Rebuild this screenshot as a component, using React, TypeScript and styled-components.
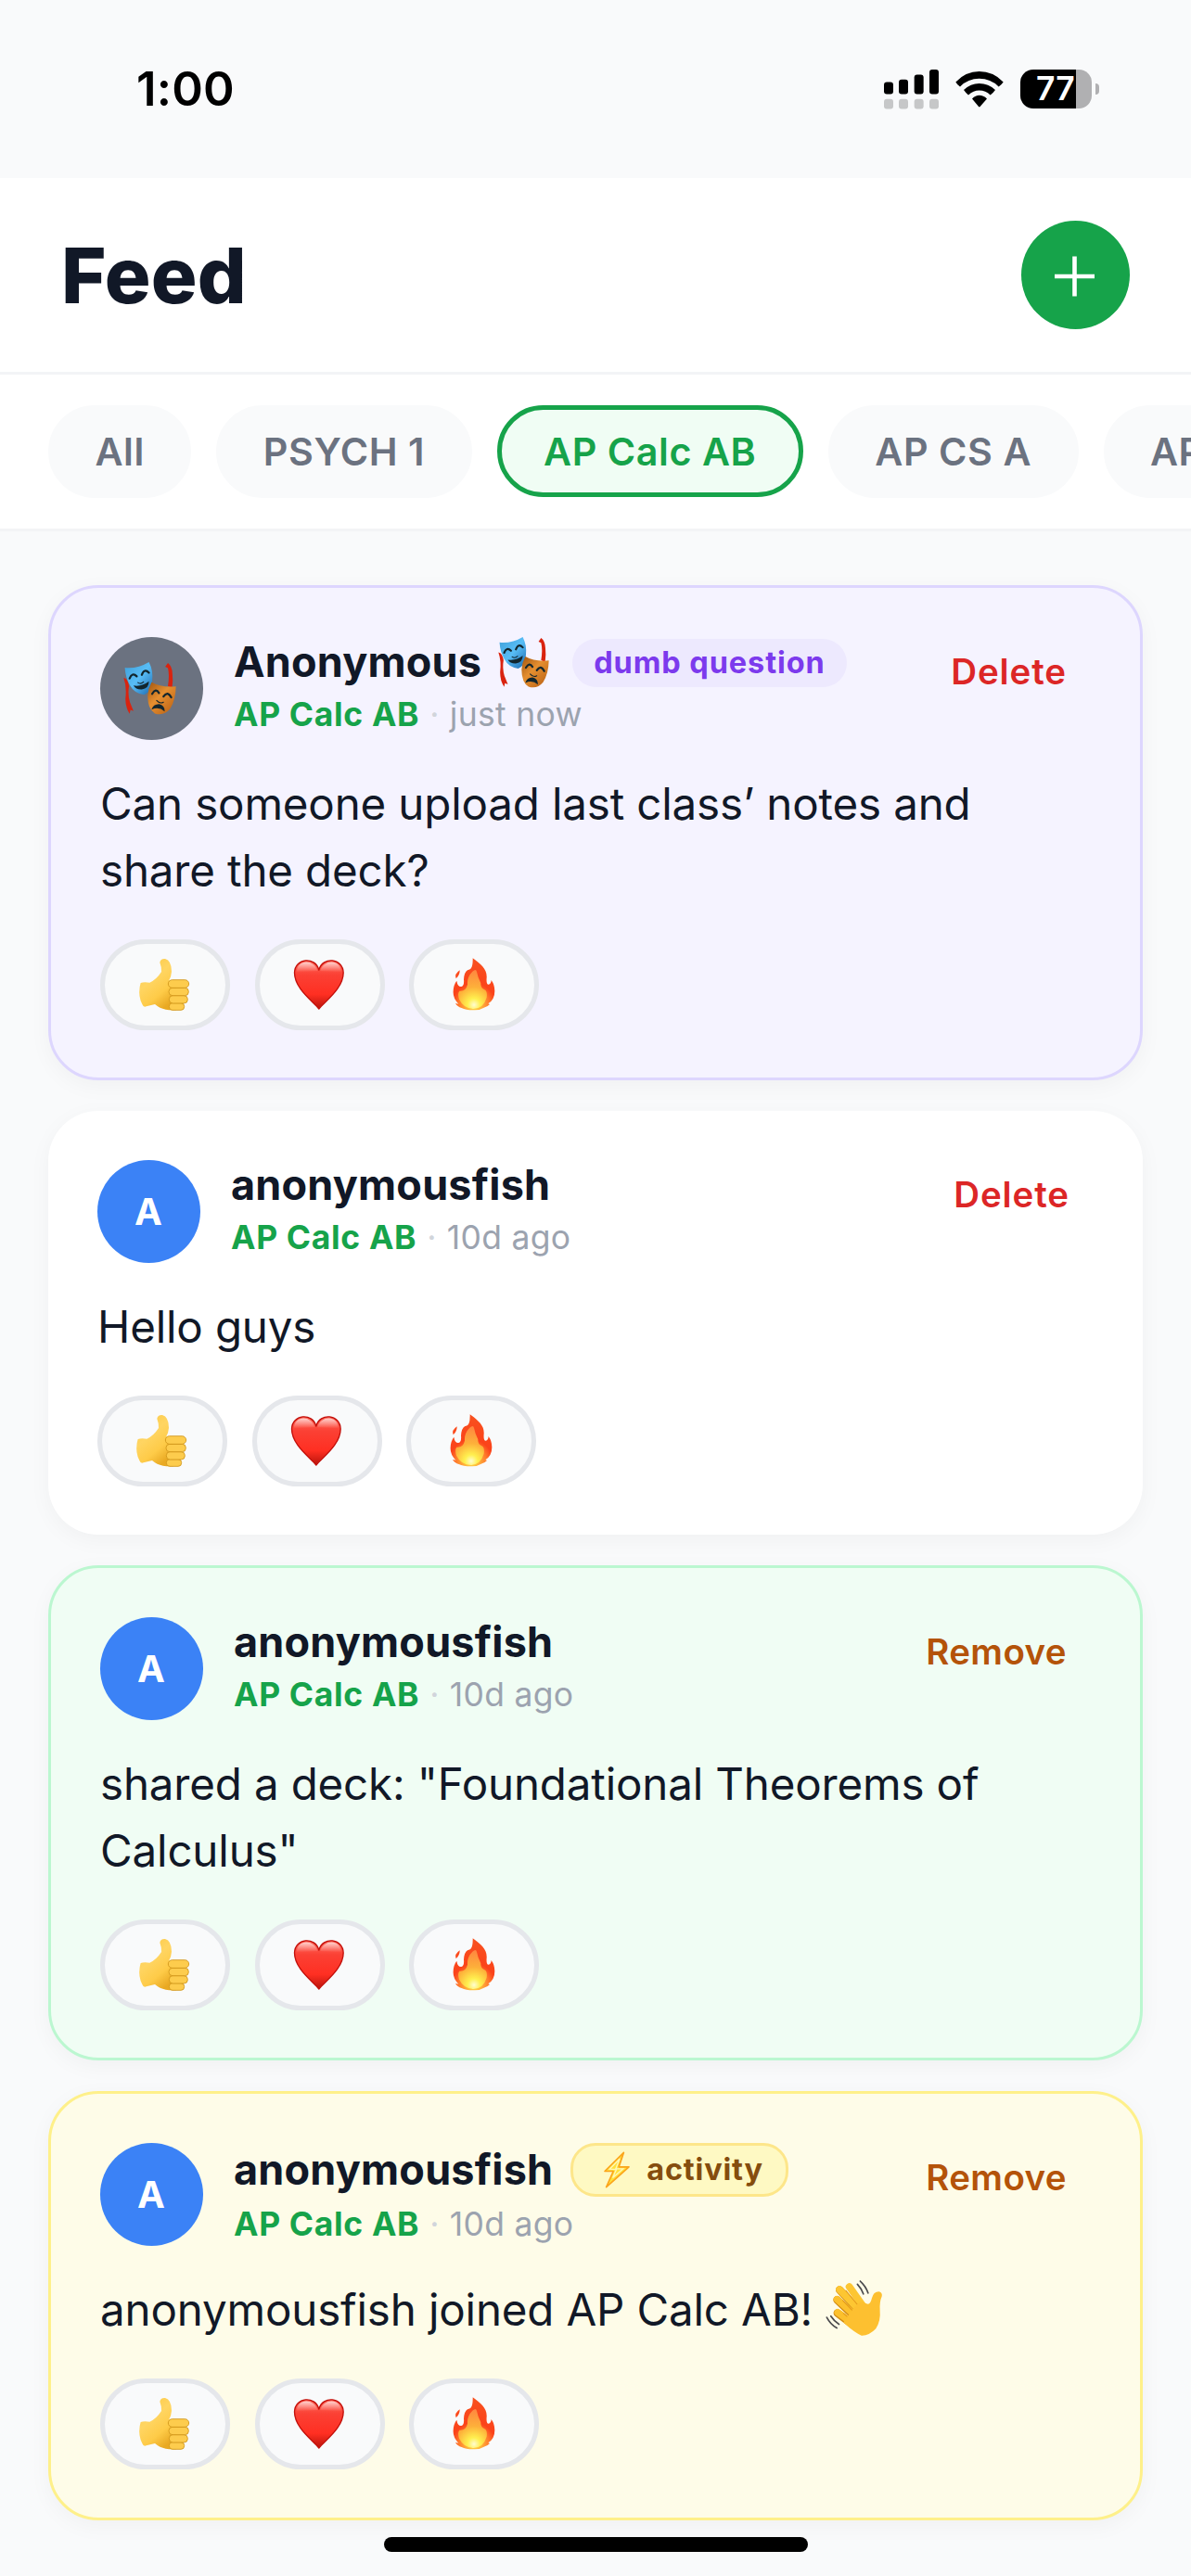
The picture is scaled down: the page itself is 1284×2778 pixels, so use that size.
import React from 'react';
import styled, { createGlobalStyle } from 'styled-components';

const GlobalStyle = createGlobalStyle`
  *, *::before, *::after { box-sizing: border-box; }
  html, body { margin: 0; padding: 0; background: #f9fafb; }
  body { font-family: Inter, Roboto, "Liberation Sans", sans-serif; color: #111827; -webkit-font-smoothing: antialiased; }
  button { font: inherit; color: inherit; border: 0; background: none; padding: 0; margin: 0; }
  svg { display: block; overflow: visible; }
`;

type Tone = 'question' | 'plain' | 'deck' | 'activity';

const tones: Record<Tone, { bg: string; border: string }> = {
  question: { bg: '#f5f3ff', border: '#ddd6fe' },
  plain: { bg: '#ffffff', border: '' },
  deck: { bg: '#f0fdf4', border: '#bbf7d0' },
  activity: { bg: '#fefce8', border: '#fef08a' },
};

const Screen = styled.div`
  width: 1284px;
  height: 2778px;
  display: flex;
  flex-direction: column;
  overflow: hidden;
  position: relative;
  background: #f9fafb;
`;

const StatusBar = styled.div`
  flex: none;
  height: 192px;
  padding: 0 99px 0 147px;
  display: flex;
  align-items: center;
  justify-content: space-between;
`;

const Clock = styled.div`
  font-size: 51px;
  line-height: 60px;
  font-weight: 600;
  letter-spacing: 0.2px;
  color: #000;
`;

const StatusIcons = styled.div`
  display: flex;
  align-items: center;
  gap: 18px;
`;

const Battery = styled.div`
  display: flex;
  align-items: center;
  gap: 4px;
`;

const BatteryBody = styled.div`
  width: 77px;
  height: 42px;
  border-radius: 14px;
  background: linear-gradient(90deg, #000 0 60px, #b0b0b2 60px);
  display: flex;
  align-items: center;
  justify-content: center;
  padding-right: 1px;
  font-size: 35.5px;
  line-height: 42px;
  font-weight: 600;
  letter-spacing: 0.1px;
  color: #fff;
`;

const BatteryTip = styled.div`
  width: 4px;
  height: 12px;
  border-radius: 0 6px 6px 0;
  background: #b0b0b2;
`;

const Header = styled.header`
  flex: none;
  height: 212px;
  padding: 0 66px;
  display: flex;
  align-items: center;
  justify-content: space-between;
  background: #fff;
  border-bottom: 3px solid #f3f4f6;
`;

const Title = styled.h1`
  margin: 0;
  font-size: 83px;
  line-height: 100px;
  font-weight: 800;
  letter-spacing: 0.2px;
`;

const AddButton = styled.button`
  width: 117px;
  height: 117px;
  border-radius: 50%;
  background: #16a34a;
  display: flex;
  align-items: center;
  justify-content: center;
  padding-right: 2px;
`;

const FilterBar = styled.nav`
  flex: none;
  height: 169px;
  padding: 33px 52px 0;
  display: flex;
  align-items: flex-start;
  gap: 27px;
  background: #fff;
  border-bottom: 3px solid #f3f4f6;
  overflow: hidden;
`;

const Chip = styled.button<{ $active?: boolean }>`
  flex: none;
  height: ${(p) => (p.$active ? '99px' : '100px')};
  padding: 0 45.5px;
  border-radius: 54px;
  border: 5px solid ${(p) => (p.$active ? '#16a34a' : '#f9fafb')};
  background: ${(p) => (p.$active ? '#f0fdf4' : '#f9fafb')};
  color: ${(p) => (p.$active ? '#16a34a' : '#6b7280')};
  font-size: 41.3px;
  line-height: 50px;
  font-weight: 600;
  letter-spacing: 0.55px;
  white-space: nowrap;
`;

const Feed = styled.main`
  padding: 58px 52px 0;
  display: flex;
  flex-direction: column;
  gap: 33px;
`;

const Card = styled.article<{ $tone: Tone }>`
  flex: none;
  padding: 53px 53px 51.8px;
  border-radius: 54px;
  background: ${(p) => tones[p.$tone].bg};
  border: ${(p) => (tones[p.$tone].border ? `3px solid ${tones[p.$tone].border}` : '0')};
  box-shadow: 0 6px 24px rgba(0, 0, 0, 0.04);
`;

const CardHead = styled.div`
  height: 111px;
  display: flex;
  align-items: flex-start;
`;

const Avatar = styled.div<{ $anonymous?: boolean }>`
  flex: none;
  width: 111px;
  height: 111px;
  margin-right: 33px;
  padding-right: ${(p) => (p.$anonymous ? '5px' : '1px')};
  border-radius: 50%;
  background: ${(p) => (p.$anonymous ? '#6b7280' : '#3b82f6')};
  color: #fff;
  font-size: 40px;
  line-height: 48px;
  font-weight: 700;
  display: flex;
  align-items: center;
  justify-content: center;
`;

const Identity = styled.div`
  flex: 1;
  display: flex;
  flex-direction: column;
  gap: 8px;
`;

const NameRow = styled.div`
  display: flex;
  align-items: center;
  gap: 19px;
`;

const Name = styled.div`
  display: flex;
  align-items: center;
  gap: 18px;
  height: 54px;
  font-size: 45px;
  line-height: 54px;
  font-weight: 700;
  letter-spacing: 0.2px;
`;

const QuestionBadge = styled.span`
  height: 52px;
  padding: 0 23px;
  margin: 2px 0 0 6px;
  border-radius: 27px;
  background: #ede9fe;
  color: #7c3aed;
  font-size: 32.5px;
  line-height: 52px;
  font-weight: 700;
  letter-spacing: 0.9px;
  white-space: nowrap;
`;

const ActivityBadge = styled.span`
  height: 58px;
  padding: 0 24px 0 33px;
  display: flex;
  align-items: center;
  gap: 18px;
  border: 3px solid #fde68a;
  border-radius: 27px;
  background: #fef9c3;
  color: #854d0e;
  font-size: 32.5px;
  line-height: 48px;
  font-weight: 700;
  letter-spacing: 0.8px;
`;

const Meta = styled.div`
  display: flex;
  gap: 11px;
  font-size: 35.5px;
  line-height: 43px;
  letter-spacing: 0.3px;
  color: #9ca3af;
`;

const Course = styled.span`
  color: #16a34a;
  font-weight: 700;
  letter-spacing: 0.65px;
`;

const Dot = styled.span`
  color: #d1d5db;
`;

const ActionButton = styled.button<{ $danger?: boolean }>`
  margin: 13px 26px 0 0;
  font-size: 38.5px;
  line-height: 48px;
  font-weight: 600;
  letter-spacing: ${(p) => (p.$danger ? '0.9px' : '0.4px')};
  color: ${(p) => (p.$danger ? '#dc2626' : '#b45309')};
`;

const Message = styled.p`
  margin: 33px 0 38.5px;
  font-size: 47.5px;
  line-height: 71.5px;
  letter-spacing: -0.16px;
`;

const InlineEmoji = styled.span`
  display: inline-block;
  vertical-align: -11px;
  height: 60px;
  margin-left: 1px;
`;

const Reactions = styled.div`
  display: flex;
  gap: 26.6px;
`;

const Reaction = styled.button`
  width: 140px;
  height: 98px;
  border: 5px solid #e5e7eb;
  border-radius: 49px;
  background: #f9fafb;
  display: flex;
  align-items: center;
  justify-content: center;
`;

const HomeIndicator = styled.div`
  position: absolute;
  left: 414px;
  bottom: 26px;
  width: 457px;
  height: 16px;
  border-radius: 8px;
  background: #000;
`;

const SignalIcon = () => (
  <svg width="59" height="42.5" viewBox="99 71 177 127">
    <g fill="#000">
      <rect x="99" y="111" width="30" height="39" rx="9" />
      <rect x="147" y="103" width="30" height="47" rx="9" />
      <rect x="197" y="87" width="30" height="63" rx="9" />
      <rect x="246" y="71" width="30" height="79" rx="9" />
    </g>
    <g fill="#c6c7c8">
      {[99, 147, 197, 246].map((x) => (
        <rect key={x} x={x} y="166" width="30" height="32" rx="9" />
      ))}
    </g>
  </svg>
);

const WifiIcon = () => (
  <svg width="52" height="38.5" viewBox="330 78 156 115">
    <path d="M331 112 Q364 78 407 78 Q452 78 485 112 Q479 121 470 127 Q444 101 407 101 Q371 101 345 127 Q336 121 331 112Z" />
    <path d="M357 138 Q379 117 407 117 Q437 117 459 138 Q453 147 443 154 Q428 139 407 139 Q388 139 372 154 Q363 147 357 138Z" />
    <path d="M384 166 Q395 155 407 155 Q421 155 432 166 L411 190 Q407 195 404 190Z" />
  </svg>
);

const PlusIcon = () => (
  <svg width="43" height="43" viewBox="0 0 43 43" stroke="#fff" strokeWidth="4.6">
    <path d="M0 23H43M21.5 1.5V44.5" />
  </svg>
);

const MasksEmoji = ({ size }: { size: number }) => {
  const id = React.useId();
  return (
    <svg width={size} height={size} viewBox="127 127 176 178">
      <defs>
        <linearGradient id={`${id}b`} x1="0" y1="0" x2="1" y2="1">
          <stop offset="0" stopColor="#3f9fd8" />
          <stop offset="0.5" stopColor="#58bdf6" />
          <stop offset="1" stopColor="#1c68ae" />
        </linearGradient>
        <linearGradient id={`${id}o`} x1="0" y1="0" x2="0.9" y2="1">
          <stop offset="0" stopColor="#a0540f" />
          <stop offset="0.45" stopColor="#e58f30" />
          <stop offset="1" stopColor="#b96115" />
        </linearGradient>
      </defs>
      <path fill="#d9230f" d="M127 180 Q141 182 145 208 Q140 235 148 262 L160 292 L150 288 L147 301 Q133 280 133 250 Q138 210 127 180Z" />
      <path fill="#d9230f" d="M267 143 L276 130 Q290 140 291 165 Q294 190 290 214 L276 208 Q282 170 276 147Z" />
      <path fill={`url(#${id}b)`} d="M131 146 Q174 150 212 127 Q227 155 223 190 Q220 228 196 237 Q163 233 148 205 Q133 180 131 146Z" />
      <path fill={`url(#${id}o)`} d="M221 195 Q255 214 303 209 Q302 255 283 285 Q262 310 232 300 Q208 285 208 240 Q210 215 221 195Z" />
      <g fill="none" stroke="#12262e" strokeLinecap="round" strokeWidth="7">
        <path d="M147 182 Q156 160 171 175" />
        <path d="M188 170 Q197 147 212 163" />
        <path d="M223 234 Q235 213 246 231" />
        <path d="M261 243 Q275 222 287 246" />
      </g>
      <g fill="none" stroke="#12262e" strokeLinecap="round" strokeWidth="3.5">
        <path d="M175 196 Q185 203 194 194" />
        <path d="M238 256 Q249 269 261 262" />
      </g>
      <path fill="#12262e" d="M160 206 Q188 211 212 192 Q212 217 188 219 Q168 220 160 206Z" />
      <path fill="#12262e" d="M221 287 Q226 269 246 268 Q266 273 265 293 Q245 276 221 287Z" />
    </svg>
  );
};

const ThumbEmoji = () => {
  const id = React.useId();
  return (
    <svg width="56" height="56" viewBox="180 101 168 168">
      <defs>
        <linearGradient id={id} x1="0" y1="0" x2="0.6" y2="1">
          <stop offset="0" stopColor="#fac63f" />
          <stop offset="0.45" stopColor="#ffd562" />
          <stop offset="0.75" stopColor="#fecb48" />
          <stop offset="1" stopColor="#e9a923" />
        </linearGradient>
      </defs>
      <path fill={`url(#${id})`} d="M185 179 Q196 175 214 178 Q236 168 252 143 Q253 128 247 113 Q249 100 264 101 Q285 107 285 142 Q284 157 277 170 L300 180 L300 267 L277 267 Q254 264 240 255 L231 248 L203 255 Q194 259 190 248 Q177 225 182 192Z" />
      <g fill="#fdcc4d" stroke="#cf9418" strokeWidth="2.5">
        <rect x="277" y="244" width="49" height="23" rx="11" />
        <rect x="277" y="220" width="60" height="25" rx="12" />
        <rect x="276" y="195" width="64" height="25" rx="12" />
        <rect x="274" y="169" width="67" height="26" rx="13" />
      </g>
    </svg>
  );
};

const HeartEmoji = () => {
  const id = React.useId();
  return (
    <svg width="56" height="56" viewBox="680.5 101 168 168">
      <defs>
        <linearGradient id={`${id}f`} x1="0" y1="0" x2="0" y2="1">
          <stop offset="0" stopColor="#ff6a5c" />
          <stop offset="0.3" stopColor="#fb4034" />
          <stop offset="0.7" stopColor="#ff2f22" />
          <stop offset="1" stopColor="#b8140b" />
        </linearGradient>
        <linearGradient id={`${id}h`} x1="0" y1="0" x2="0" y2="1">
          <stop offset="0" stopColor="#fff" stopOpacity="0.7" />
          <stop offset="1" stopColor="#fff" stopOpacity="0" />
        </linearGradient>
      </defs>
      <path fill={`url(#${id}f)`} stroke="#c20f0a" strokeWidth="4" strokeLinejoin="round" d="M761 263 C738 236 682 196 682 146 C683 98 749 92 761 137 C773 92 839 98 840 146 C840 196 784 236 761 263Z" />
      <path fill={`url(#${id}h)`} d="M689 144 C689 102 746 100 757 141Z M765 141 C776 100 833 102 833 144Z" />
    </svg>
  );
};

const FireEmoji = () => {
  const id = React.useId();
  return (
    <svg width="56" height="56" viewBox="1179 101 168 168">
      <defs>
        <radialGradient id={`${id}o`} gradientUnits="userSpaceOnUse" cx="1263" cy="250" r="140">
          <stop offset="0" stopColor="#ffe94a" />
          <stop offset="0.35" stopColor="#ff7a2b" />
          <stop offset="0.5" stopColor="#fb431a" />
          <stop offset="1" stopColor="#f8501f" />
        </radialGradient>
        <radialGradient id={`${id}i`} gradientUnits="userSpaceOnUse" cx="1263" cy="250" r="115">
          <stop offset="0" stopColor="#fffcd0" />
          <stop offset="0.18" stopColor="#fff04f" />
          <stop offset="0.5" stopColor="#fdb03a" />
          <stop offset="1" stopColor="#ff8440" />
        </radialGradient>
      </defs>
      <path fill={`url(#${id}o)`} d="M1259 99 C1285 118 1306 135 1304 162 Q1302 184 1310 184 Q1318 183 1319 170 Q1330 185 1330 205 Q1330 232 1309 246 L1314 248 Q1306 257 1295 259 Q1281 268 1262 267 Q1237 267 1223 260 Q1209 256 1203 245 L1213 247 Q1194 228 1196 205 Q1197 185 1207 172 Q1210 192 1222 191 Q1232 189 1230 168 Q1231 144 1243 137 Q1260 139 1259 99Z" />
      <path fill={`url(#${id}i)`} d="M1258 142 Q1270 132 1272 143 Q1276 163 1285 180 Q1284 196 1297 201 Q1307 206 1304 226 Q1294 261 1262 263 Q1230 262 1215 232 Q1209 213 1216 205 Q1237 207 1242 184 Q1240 160 1258 142Z" />
      <path fill="#fb4a1c" d="M1217 138 Q1217 155 1205 165 Q1199 150 1217 138Z" />
    </svg>
  );
};

const WaveEmoji = () => (
  <svg width="61" height="60" viewBox="93 90 181 178">
    <g fill="none" strokeLinecap="round" strokeLinejoin="round">
      <g stroke="#d08a14" strokeWidth="25">
        <path d="M131 195 L185 237 M130 153 L200 220 M138 121 L215 205" />
      </g>
      <g stroke="#fcc02c" strokeWidth="22">
        <path d="M132 193 L190 235" />
        <path d="M130 151 L200 215" />
      </g>
      <g stroke="#fdc632" strokeWidth="23">
        <path d="M138 120 L215 200" />
        <path d="M169 111 L225 190" />
      </g>
      <path stroke="#e39a1c" strokeWidth="3" d="M168 212 L150 196 M180 188 L148 155 M194 167 L158 123" />
    </g>
    <path fill="#fdc030" d="M160 210 L184 178 L205 158 L224 165 Q236 171 241 148 Q246 126 264 126 Q276 130 273 142 Q265 160 267 188 Q270 220 254 245 Q232 268 208 267 Q186 258 150 225Z" />
    <g fill="none" stroke="#4a4a4c" strokeWidth="5" strokeLinecap="round">
      <path d="M195 103 Q208 117 214 134" />
      <path d="M204 93 Q222 109 229 131" />
      <path d="M110 205 Q121 222 136 231" />
      <path d="M97 209 Q109 232 129 243" />
    </g>
  </svg>
);

const BoltEmoji = () => (
  <svg width="28" height="40" viewBox="215 90 85 119">
    <path fill="#ffe23c" stroke="#fba51c" strokeWidth="5" strokeLinejoin="round" d="M280 93 L218 154 L246 154 L223 206 L297 140 L264 140Z" />
    <path fill="none" stroke="#fff7b8" strokeWidth="4" d="M267 113 L234 147 L256 148 L244 175 L278 146 L254 146Z" />
  </svg>
);

interface Post {
  tone: Tone;
  name: string;
  time: string;
  action: string;
  text: React.ReactNode;
}

const posts: Post[] = [
  { tone: 'question', name: 'Anonymous', time: 'just now', action: 'Delete', text: 'Can someone upload last class’ notes and share the deck?' },
  { tone: 'plain', name: 'anonymousfish', time: '10d ago', action: 'Delete', text: 'Hello guys' },
  { tone: 'deck', name: 'anonymousfish', time: '10d ago', action: 'Remove', text: 'shared a deck: "Foundational Theorems of Calculus"' },
  {
    tone: 'activity',
    name: 'anonymousfish',
    time: '10d ago',
    action: 'Remove',
    text: (
      <>
        anonymousfish joined AP Calc AB! <InlineEmoji><WaveEmoji /></InlineEmoji>
      </>
    ),
  },
];

const PostCard = ({ post }: { post: Post }) => {
  const anonymous = post.tone === 'question';
  return (
    <Card $tone={post.tone}>
      <CardHead>
        <Avatar $anonymous={anonymous}>{anonymous ? <MasksEmoji size={57} /> : 'A'}</Avatar>
        <Identity>
          <NameRow>
            <Name>
              {post.name}
              {anonymous && <MasksEmoji size={55} />}
            </Name>
            {anonymous && <QuestionBadge>dumb question</QuestionBadge>}
            {post.tone === 'activity' && (
              <ActivityBadge>
                <BoltEmoji />
                activity
              </ActivityBadge>
            )}
          </NameRow>
          <Meta>
            <Course>AP Calc AB</Course>
            <Dot>·</Dot>
            <span>{post.time}</span>
          </Meta>
        </Identity>
        <ActionButton $danger={post.action === 'Delete'}>{post.action}</ActionButton>
      </CardHead>
      <Message>{post.text}</Message>
      <Reactions>
        <Reaction aria-label="Like"><ThumbEmoji /></Reaction>
        <Reaction aria-label="Love"><HeartEmoji /></Reaction>
        <Reaction aria-label="Fire"><FireEmoji /></Reaction>
      </Reactions>
    </Card>
  );
};

const filters = ['All', 'PSYCH 1', 'AP Calc AB', 'AP CS A', 'AP Bio'];

export default function App() {
  return (
    <>
      <GlobalStyle />
      <Screen>
        <StatusBar>
          <Clock>1:00</Clock>
          <StatusIcons>
            <SignalIcon />
            <WifiIcon />
            <Battery>
              <BatteryBody>77</BatteryBody>
              <BatteryTip />
            </Battery>
          </StatusIcons>
        </StatusBar>
        <Header>
          <Title>Feed</Title>
          <AddButton aria-label="New post"><PlusIcon /></AddButton>
        </Header>
        <FilterBar>
          {filters.map((label) => (
            <Chip key={label} $active={label === 'AP Calc AB'}>{label}</Chip>
          ))}
        </FilterBar>
        <Feed>
          {posts.map((post, i) => (
            <PostCard key={i} post={post} />
          ))}
        </Feed>
        <HomeIndicator />
      </Screen>
    </>
  );
}
